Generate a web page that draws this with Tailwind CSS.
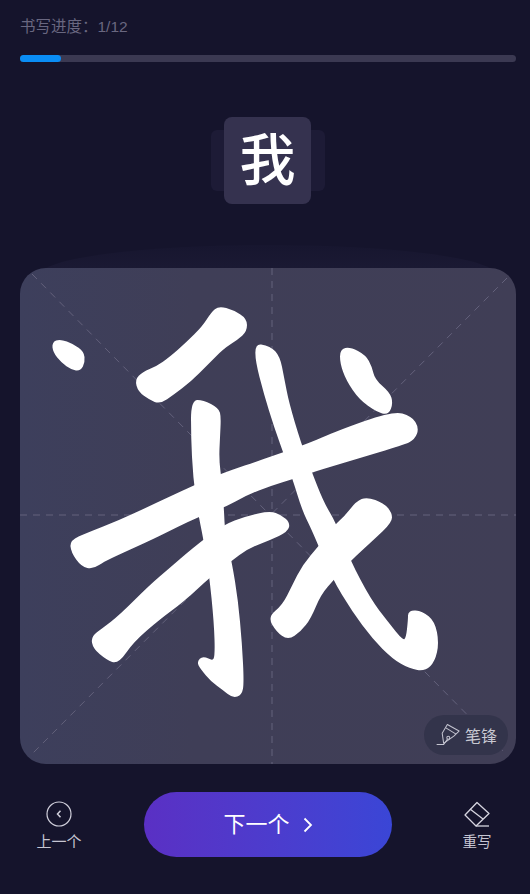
<!DOCTYPE html>
<html lang="zh-CN">
<head>
<meta charset="UTF-8">
<meta name="viewport" content="width=device-width, initial-scale=1.0">
<title>书写进度</title>
<script src="https://cdn.jsdelivr.net/npm/@tailwindcss/browser@4"></script>
</head>
<body class="w-[530px] h-[894px] overflow-hidden bg-[#15142c] font-['Liberation_Sans','Noto_Sans_CJK_SC',sans-serif]">
<div class="flex flex-col pl-5 pr-[14px] pt-[17px]">
  <!-- progress -->
  <div class="text-[15.5px] leading-[20px] text-[#696780]">书写进度：1/12</div>
  <div class="mt-[18px] h-[7px] w-full rounded-full bg-[#3b3952]">
    <div class="h-full w-[41px] rounded-full bg-[#0a8df5]"></div>
  </div>

  <!-- current character -->
  <div class="mt-[55px] flex justify-center">
    <div class="flex items-center">
      <div class="h-[61px] w-[13px] rounded-l-md bg-[#1d1b36]"></div>
      <div class="flex h-[87px] w-[87px] items-center justify-center rounded-lg bg-[#35324f] text-[56px] leading-none font-medium text-white">我</div>
      <div class="h-[61px] w-[14px] rounded-r-md bg-[#1d1b36]"></div>
    </div>
  </div>

  <!-- writing box -->
  <div class="relative mt-[64px] h-[496px] w-[496px]">
    <div class="absolute left-[20px] top-[-23px] h-[60px] w-[456px] rounded-[50%] bg-linear-to-b from-[#17162f] to-[#201e3a]"></div>
    <div class="absolute inset-0 overflow-hidden rounded-[26px] bg-linear-to-r from-[#3d3f5c] via-[#3f3e57] via-35% to-[#403e56]">
      <svg id="ink" class="absolute inset-0" width="496" height="496" viewBox="20 268 496 496" fill="none">
        <g stroke="#64627c" stroke-width="1" stroke-dasharray="7 6">
          <path d="M32 274L506 754"/>
          <path d="M507 278L32 754"/>
          <path d="M272 268V764"/>
          <path d="M20 515H516"/>
        </g>
      </svg>
    </div>
    <div class="absolute left-[404px] top-[447px] flex h-[40px] w-[84px] items-center gap-[5px] rounded-full bg-[#33344b] pl-[12px] text-[16px] text-[#c8c8d2]">
      <svg width="24" height="24" viewBox="0 0 26 24" fill="none" stroke="#c4c4d0" stroke-width="1.1" stroke-linejoin="round">
        <path d="M12.300 0.700L25 7.700L19.300 13.300L8.300 21L6.700 10Z"/>
        <path d="M10.700 4.300L21.700 11"/>
        <path d="M0.700 22.300H8.300L12.500 16.500"/>
        <circle cx="13.300" cy="15" r="1.600"/>
      </svg>
      <span class="pt-[3px]">笔锋</span>
    </div>
  </div>

  <!-- bottom actions -->
  <div class="mt-[28px] flex h-[65px] items-center justify-between">
    <div class="flex w-[78px] flex-col items-center pt-[4px] text-[15px] leading-[20px] text-[#c6c5d2]">
      <svg width="26" height="26" viewBox="0 0 26 26" fill="none" stroke="#d0cfdb" stroke-width="1.2">
        <circle cx="13" cy="13" r="12"/>
        <path d="M14.500 9.800L11.500 13L14.500 16.200" stroke-width="1.500"/>
      </svg>
      <span class="mt-[5px]">上一个</span>
    </div>
    <div class="flex h-[65px] w-[248px] items-center justify-center gap-[13px] rounded-full bg-linear-to-r from-[#5a30c4] to-[#3a46d6] text-[22px] text-white">
      <span>下一个</span>
      <svg width="10" height="16" viewBox="0 0 10 16" fill="none" stroke="#ffffff" stroke-width="1.800"><path d="M1.500 1.500L8 8L1.500 14.500"/></svg>
    </div>
    <div class="flex w-[78px] flex-col items-center pt-[4px] text-[14.5px] leading-[20px] text-[#c6c5d2]">
      <svg width="26" height="26" viewBox="0 0 26 26" fill="none" stroke="#d6d5e0" stroke-width="1.3" stroke-linejoin="round">
        <path d="M13 1.500L25 12.500L12 25L1 14Z"/>
        <path d="M6 8L19 18"/>
        <path d="M12 25H25"/>
      </svg>
      <span class="mt-[5px]">重写</span>
    </div>
  </div>
</div>
<script>
  // brush strokes of the written sample, page coordinates
  const strokes = [
    [[53,343],[60,340],[73,345],[83,352],[84,362],[80,370],[72,369],[62,362],[54,352]],
    [[219,307],[233,311],[246,319],[246,331],[237,339],[223,348],[207,364],[190,381],[173,394],[160,403],[150,399],[139,391],[136,380],[143,373],[157,367],[170,358],[187,343],[203,327],[212,313]],
    [[71,541],[72,552],[82,566],[93,568],[103,561],[120,553],[153,538],[177,526],[198,516],[223,507],[247,494],[270,485],[293,478],[313,471],[353,459],[403,444],[414,439],[418,428],[411,417],[393,412],[337,432],[310,444],[270,458],[220,475],[193,487],[167,499],[150,507],[120,521],[87,534]],
    [[192,401],[203,401],[218,409],[220,417],[219,437],[218,460],[221,483],[223,510],[224,533],[231,563],[237,600],[241,643],[243,683],[241,694],[233,697],[223,689],[212,681],[201,668],[198,662],[203,657],[213,662],[216,656],[215,623],[210,573],[204,537],[199,513],[194,477],[192,437]],
    [[92,637],[94,648],[107,659],[118,663],[133,641],[160,618],[183,601],[210,576],[230,561],[247,548],[270,539],[287,531],[289,523],[281,516],[270,512],[247,517],[223,526],[193,549],[170,569],[150,586],[120,616],[103,629]],
    [[252,344],[270,347],[279,357],[283,377],[288,403],[300,443],[310,470],[323,503],[335,523],[349,560],[370,600],[387,622],[403,642],[407,638],[409,620],[409,611],[422,612],[434,622],[438,643],[434,661],[425,670],[410,668],[393,658],[373,638],[353,611],[333,578],[313,530],[303,510],[293,477],[269,410]],
    [[341,350],[350,348],[365,356],[371,367],[374,380],[389,393],[392,403],[388,414],[377,411],[360,399],[347,380],[341,363]],
    [[391,513],[391,522],[373,539],[349,561],[334,578],[320,594],[310,618],[300,631],[288,639],[277,631],[269,617],[283,606],[293,586],[303,566],[320,546],[335,526],[345,517],[357,502],[367,498],[383,504]],
  ];
  const ink = document.getElementById('ink');
  strokes.forEach(pts => {
    const mid = (a, b) => [(a[0] + b[0]) / 2, (a[1] + b[1]) / 2];
    let d = 'M' + mid(pts[pts.length - 1], pts[0]).join(' ');
    pts.forEach((p, i) => {
      d += 'Q' + p.join(' ') + ' ' + mid(p, pts[(i + 1) % pts.length]).join(' ');
    });
    const path = document.createElementNS('http://www.w3.org/2000/svg', 'path');
    path.setAttribute('d', d + 'Z');
    path.setAttribute('fill', '#ffffff');
    path.setAttribute('stroke', '#ffffff');
    path.setAttribute('stroke-width', 2);
    path.setAttribute('stroke-linejoin', 'round');
    ink.appendChild(path);
  });
</script>
</body>
</html>
